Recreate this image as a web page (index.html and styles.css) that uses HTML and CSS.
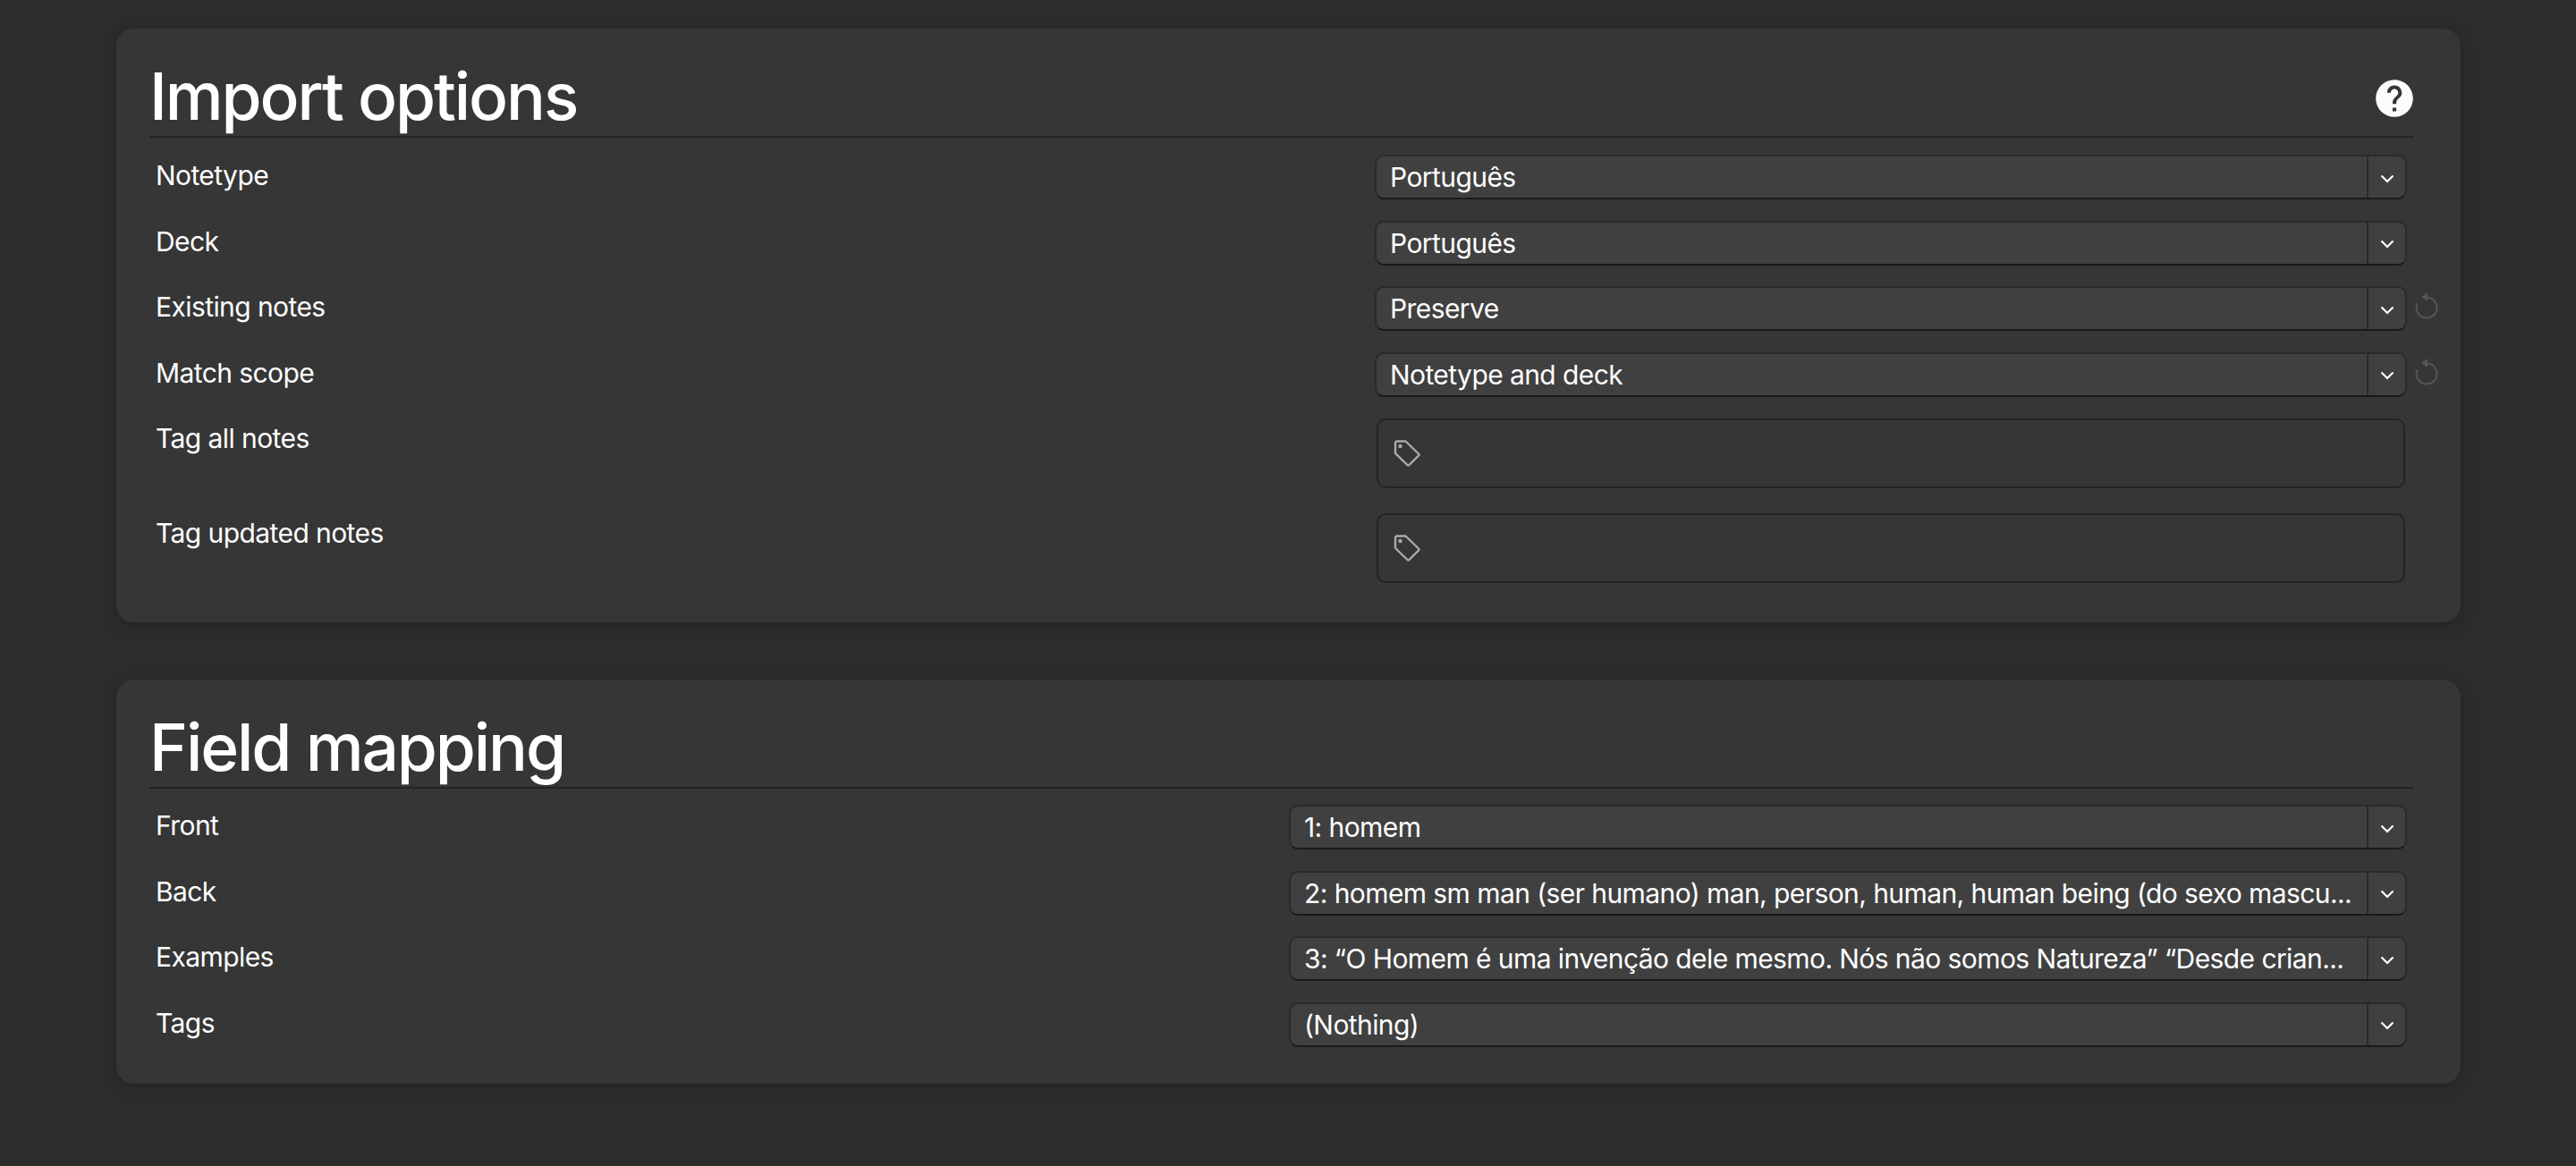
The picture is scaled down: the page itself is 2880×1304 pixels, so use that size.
FILE: index.html

```html
<!DOCTYPE html>
<html lang="en">
<head>
  <meta charset="UTF-8" />
  <title>Import</title>
  <link rel="stylesheet" href="styles.css">
</head>
<body>
  <svg class="defs" width="0" height="0">
    <symbol id="chevron" viewBox="0 0 16 12"><path d="M1.5 2.5 L8 9 L14.5 2.5" fill="none" stroke="currentColor" stroke-width="2.2"/></symbol>
    <symbol id="reset" viewBox="0 0 26 30"><path d="M13 5.5 A11.5 11.5 0 1 1 2.5 12.5" fill="none" stroke="currentColor" stroke-width="2"/><path d="M14 0 L14 10 L7 5 Z" fill="currentColor"/></symbol>
    <symbol id="tag" viewBox="0 0 30 30"><path d="M2 3.5 Q2 1.5 4 1.5 L13.5 1.5 L28 15.5 Q29 16.5 28 17.5 L17.5 28 Q16.5 29 15.5 28 L2 15 Z" fill="none" stroke="currentColor" stroke-width="2.4" stroke-linejoin="round"/><circle cx="7.5" cy="7" r="2.2" fill="currentColor"/></symbol>
  </svg>

  <div class="card">
    <div class="card-head">
      <h1>Import options</h1>
      <svg class="help" viewBox="0 0 24 24"><path fill="currentColor" d="M15.07,11.25L14.17,12.17C13.45,12.89 13,13.5 13,15H11V14.5C11,13.39 11.45,12.39 12.17,11.67L13.41,10.41C13.78,10.05 14,9.55 14,9C14,7.89 13.1,7 12,7A2,2 0 0,0 10,9H8A4,4 0 0,1 12,5A4,4 0 0,1 16,9C16,9.88 15.64,10.67 15.07,11.25M13,19H11V17H13M12,2A10,10 0 0,0 2,12A10,10 0 0,0 12,22A10,10 0 0,0 22,12C22,6.47 17.5,2 12,2Z"/></svg>
    </div>
    <div class="row">
      <label>Notetype</label>
      <div class="select">
        <span class="value">Português</span>
        <span class="arrow"><svg><use href="#chevron"/></svg></span>
      </div>
    </div>
    <div class="row">
      <label>Deck</label>
      <div class="select">
        <span class="value">Português</span>
        <span class="arrow"><svg><use href="#chevron"/></svg></span>
      </div>
    </div>
    <div class="row">
      <label>Existing notes</label>
      <div class="select">
        <span class="value">Preserve</span>
        <span class="arrow"><svg><use href="#chevron"/></svg></span>
        <svg class="reset"><use href="#reset"/></svg>
      </div>
    </div>
    <div class="row">
      <label>Match scope</label>
      <div class="select">
        <span class="value">Notetype and deck</span>
        <span class="arrow"><svg><use href="#chevron"/></svg></span>
        <svg class="reset"><use href="#reset"/></svg>
      </div>
    </div>
    <div class="row row-tag">
      <label>Tag all notes</label>
      <div class="tags"><svg class="tag-icon"><use href="#tag"/></svg></div>
    </div>
    <div class="row row-tag">
      <label>Tag updated notes</label>
      <div class="tags"><svg class="tag-icon"><use href="#tag"/></svg></div>
    </div>
  </div>

  <div class="card card-fields">
    <div class="card-head">
      <h1>Field mapping</h1>
    </div>
    <div class="row">
      <label>Front</label>
      <div class="select">
        <span class="value">1: homem</span>
        <span class="arrow"><svg><use href="#chevron"/></svg></span>
      </div>
    </div>
    <div class="row">
      <label>Back</label>
      <div class="select">
        <span class="value">2: homem sm man (ser humano) man, person, human, human being (do sexo mascu...</span>
        <span class="arrow"><svg><use href="#chevron"/></svg></span>
      </div>
    </div>
    <div class="row">
      <label>Examples</label>
      <div class="select">
        <span class="value">3: “O Homem é uma invenção dele mesmo. Nós não somos Natureza” “Desde crian...</span>
        <span class="arrow"><svg><use href="#chevron"/></svg></span>
      </div>
    </div>
    <div class="row">
      <label>Tags</label>
      <div class="select">
        <span class="value">(Nothing)</span>
        <span class="arrow"><svg><use href="#chevron"/></svg></span>
      </div>
    </div>
  </div>
</body>
</html>
```

FILE: styles.css

```css
body {
  margin: 0;
  padding: 32px 0 0 130px;
  background: #2c2c2c;
  color: #fff;
  font-family: Inter, "Noto Sans", sans-serif;
  font-size: 30px;
  letter-spacing: -0.58px;
}
.defs {
  position: absolute;
}
.card {
  width: 2621px;
  height: 664px;
  box-sizing: border-box;
  padding: 24px 53px 0 37px;
  margin-bottom: 64px;
  background: #363636;
  border-radius: 20px;
  box-shadow: 0 4px 16px rgba(0,0,0,0.18);
}
.card-fields {
  height: 452px;
}
.card-head {
  display: flex;
  justify-content: space-between;
  align-items: center;
  height: 96px;
  border-bottom: 2px solid #222;
  margin-bottom: 19px;
}
.card-fields .card-head {
  margin-bottom: 18px;
}
h1 {
  margin: 0;
  padding-top: 8px;
  font-size: 73px;
  font-weight: 500;
  letter-spacing: -2.1px;
  line-height: 88px;
}
.help {
  width: 50px;
  height: 50px;
  margin-top: 11px;
  margin-right: -4px;
  color: #fcfcfc;
}
.row {
  display: flex;
  justify-content: space-between;
  padding: 0 7px;
  margin-bottom: 23.5px;
}
.row label {
  line-height: 46px;
}
.select {
  position: relative;
  display: flex;
  width: 1154px;
  height: 50px;
  box-sizing: border-box;
  background: #404040;
  border: 2px solid #2a2a2a;
  border-bottom-color: #191919;
  border-radius: 10px;
}
.card-fields .select {
  width: 1250px;
}
.value {
  flex: 1;
  min-width: 0;
  padding-left: 15px;
  line-height: 46px;
  white-space: nowrap;
  overflow: hidden;
}
.arrow {
  display: flex;
  align-items: center;
  justify-content: center;
  width: 41px;
  border-left: 2px solid #2a2a2a;
}
.arrow svg {
  width: 16px;
  height: 12px;
  margin-top: 3px;
}
.reset {
  position: absolute;
  left: 1161px;
  top: 5px;
  width: 26px;
  height: 30px;
  color: #555;
}
.row-tag {
  margin-bottom: 27px;
}
.tags {
  display: flex;
  align-items: center;
  width: 1150px;
  height: 78px;
  margin-top: 1px;
  margin-right: 2px;
  box-sizing: border-box;
  padding-left: 17px;
  background: #363636;
  border: 2px solid #242424;
  border-radius: 10px;
}
.tag-icon {
  width: 30px;
  height: 30px;
  color: #aaa;
}
```
